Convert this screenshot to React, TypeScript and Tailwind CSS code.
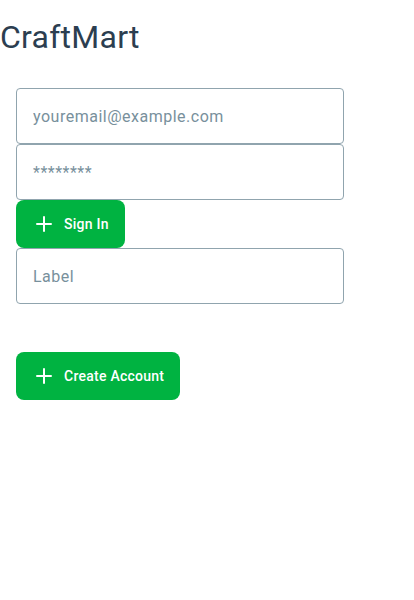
import { Plus } from "lucide-react";

function Field({ placeholder, type = "text" }: { placeholder: string; type?: string }) {
  return (
    <input
      type={type}
      placeholder={placeholder}
      className="h-14 w-full rounded border border-[#90a4ae] bg-white px-4 text-base tracking-[0.5px] text-[#263238] placeholder:text-[#78909c] outline-none"
    />
  );
}

function GreenButton({ label }: { label: string }) {
  return (
    <button className="flex h-12 items-center gap-2 self-start rounded-lg bg-[#00b341] pl-4 pr-4 text-sm font-medium tracking-[0.25px] text-white">
      <Plus size={24} strokeWidth={2} />
      <span>{label}</span>
    </button>
  );
}

export default function App() {
  return (
    <div className="min-h-[600px] w-[414px] bg-white font-['Roboto',sans-serif]">
      <h1 className="pt-[17px] text-[32px] leading-10 font-normal tracking-[0.25px] text-[#2c3e50]">CraftMart</h1>
      <div className="mt-[31px] flex w-[360px] flex-col px-4">
        <Field placeholder="youremail@example.com" type="email" />
        <Field placeholder="********" type="password" />
        <GreenButton label="Sign In" />
        <Field placeholder="Label" />
        <div className="h-12" />
        <GreenButton label="Create Account" />
      </div>
    </div>
  );
}
